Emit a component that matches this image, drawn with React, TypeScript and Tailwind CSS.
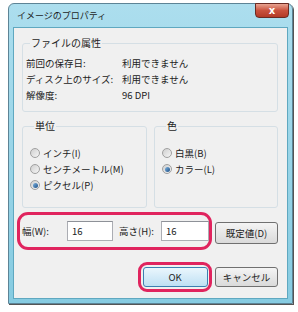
import React from "react";

const font = { fontFamily: '"Noto Sans CJK JP", "Noto Sans", sans-serif' };

function Radio({ checked, label }: { checked?: boolean; label: string }) {
  return (
    <div className="flex h-[16px] items-center">
      <span className="flex h-[10px] w-[10px] items-center justify-center rounded-full border border-[#a0a0a0] bg-gradient-to-br from-[#cfcfcf] to-[#f6f6f6]">
        {checked && (
          <span className="h-[5px] w-[5px] rounded-full bg-gradient-to-br from-[#7fb4e0] to-[#1b4f86]" />
        )}
      </span>
      <span className="ml-[3px] text-[9.5px] leading-[16px] text-[#222]">{label}</span>
    </div>
  );
}

function Group({ label, children, className }: { label: string; children: React.ReactNode; className?: string }) {
  return (
    <fieldset className={"rounded-[3px] border border-[#d5dfe5] " + (className ?? "")}>
      <legend className="ml-[4px] px-[1px] text-[10px] leading-[14px] text-[#1e1e1e]">{label}</legend>
      {children}
    </fieldset>
  );
}

export default function App() {
  return (
    <div className="h-[312px] w-[298px] bg-white" style={font}>
      <div className="ml-[8px] pt-[3px]">
        <div className="relative h-[301px] w-[285px] rounded-t-[6px] border border-[#5d8496] bg-gradient-to-b from-[#acdeee] to-[#86cbe1] px-[4px] pb-[4px] shadow-[1px_1px_0_#555]">
          <div className="flex h-[23px] items-center pl-[4px] text-[9px] text-[#1e1e1e]">
            イメージのプロパティ
          </div>
          <div className="absolute right-[3px] top-[-1px] flex h-[15px] w-[34px] items-center justify-center rounded-b-[4px] border border-[#6b2a22] bg-gradient-to-b from-[#e7a391] via-[#c9513d] to-[#b33a27] text-[10px] font-bold leading-none text-white" style={{ fontFamily: '"DejaVu Sans", sans-serif' }}>
            x
          </div>
          <div className="h-[272px] w-[275px] border border-[#5fa8c0] bg-[#f0f0f0] pt-[8px]">
            <div className="pl-[8px] pr-[9px]">
              <Group label="ファイルの属性" className="w-[256px] pb-[8px] pl-[3px] pt-[5px]">
                {[
                  ["前回の保存日:", "利用できません"],
                  ["ディスク上のサイズ:", "利用できません"],
                  ["解像度:", "96 DPI"],
                ].map(([k, v]) => (
                  <div key={k} className="flex h-[16px] items-center text-[9.5px] text-[#222]">
                    <span className="w-[96px]">{k}</span>
                    <span>{v}</span>
                  </div>
                ))}
              </Group>
              <div className="mt-[7px] flex gap-[7px]">
                <Group label="単位" className="h-[89px] w-[125px] pl-[7px] pt-[12px]">
                  <Radio label="インチ(I)" />
                  <Radio label="センチメートル(M)" />
                  <Radio checked label="ピクセル(P)" />
                </Group>
                <Group label="色" className="h-[89px] w-[124px] pl-[7px] pt-[12px]">
                  <Radio label="白黒(B)" />
                  <Radio checked label="カラー(L)" />
                </Group>
              </div>
            </div>
            <div className="mt-[4px] flex items-center pl-[3px]">
              <div className="flex h-[38px] w-[195px] items-center rounded-[11px] border-[3px] border-[#e0245e] pl-[2px] text-[9.5px] text-[#222]">
                <span className="w-[45px]">幅(W):</span>
                <div className="flex h-[20px] w-[46px] items-center border border-[#abadb3] border-t-[#8e9198] bg-white pl-[4px]">16</div>
                <span className="ml-[6px] w-[42px]">高さ(H):</span>
                <div className="flex h-[20px] w-[48px] items-center border border-[#abadb3] border-t-[#8e9198] bg-white pl-[4px]">16</div>
              </div>
              <button className="ml-[3px] mt-[4px] h-[22px] w-[63px] rounded-[3px] border border-[#707070] bg-gradient-to-b from-[#f4f4f4] to-[#dadada] text-[9.5px] text-[#222]">
                既定値(D)
              </button>
            </div>
            <div className="mt-[12px] flex items-center pl-[124px]">
              <div className="flex h-[30px] w-[74px] items-center justify-center rounded-[9px] border-[3px] border-[#e0245e]">
                <button className="h-[20px] w-[65px] rounded-[3px] border border-[#3c7fb1] bg-gradient-to-b from-[#eaf6fd] to-[#bfe0f3] text-[9.5px] text-[#222]">
                  OK
                </button>
              </div>
              <button className="ml-[3px] h-[20px] w-[63px] rounded-[3px] border border-[#707070] bg-gradient-to-b from-[#f4f4f4] to-[#dadada] text-[9.5px] text-[#222]">
                キャンセル
              </button>
            </div>
          </div>
        </div>
      </div>
    </div>
  );
}
